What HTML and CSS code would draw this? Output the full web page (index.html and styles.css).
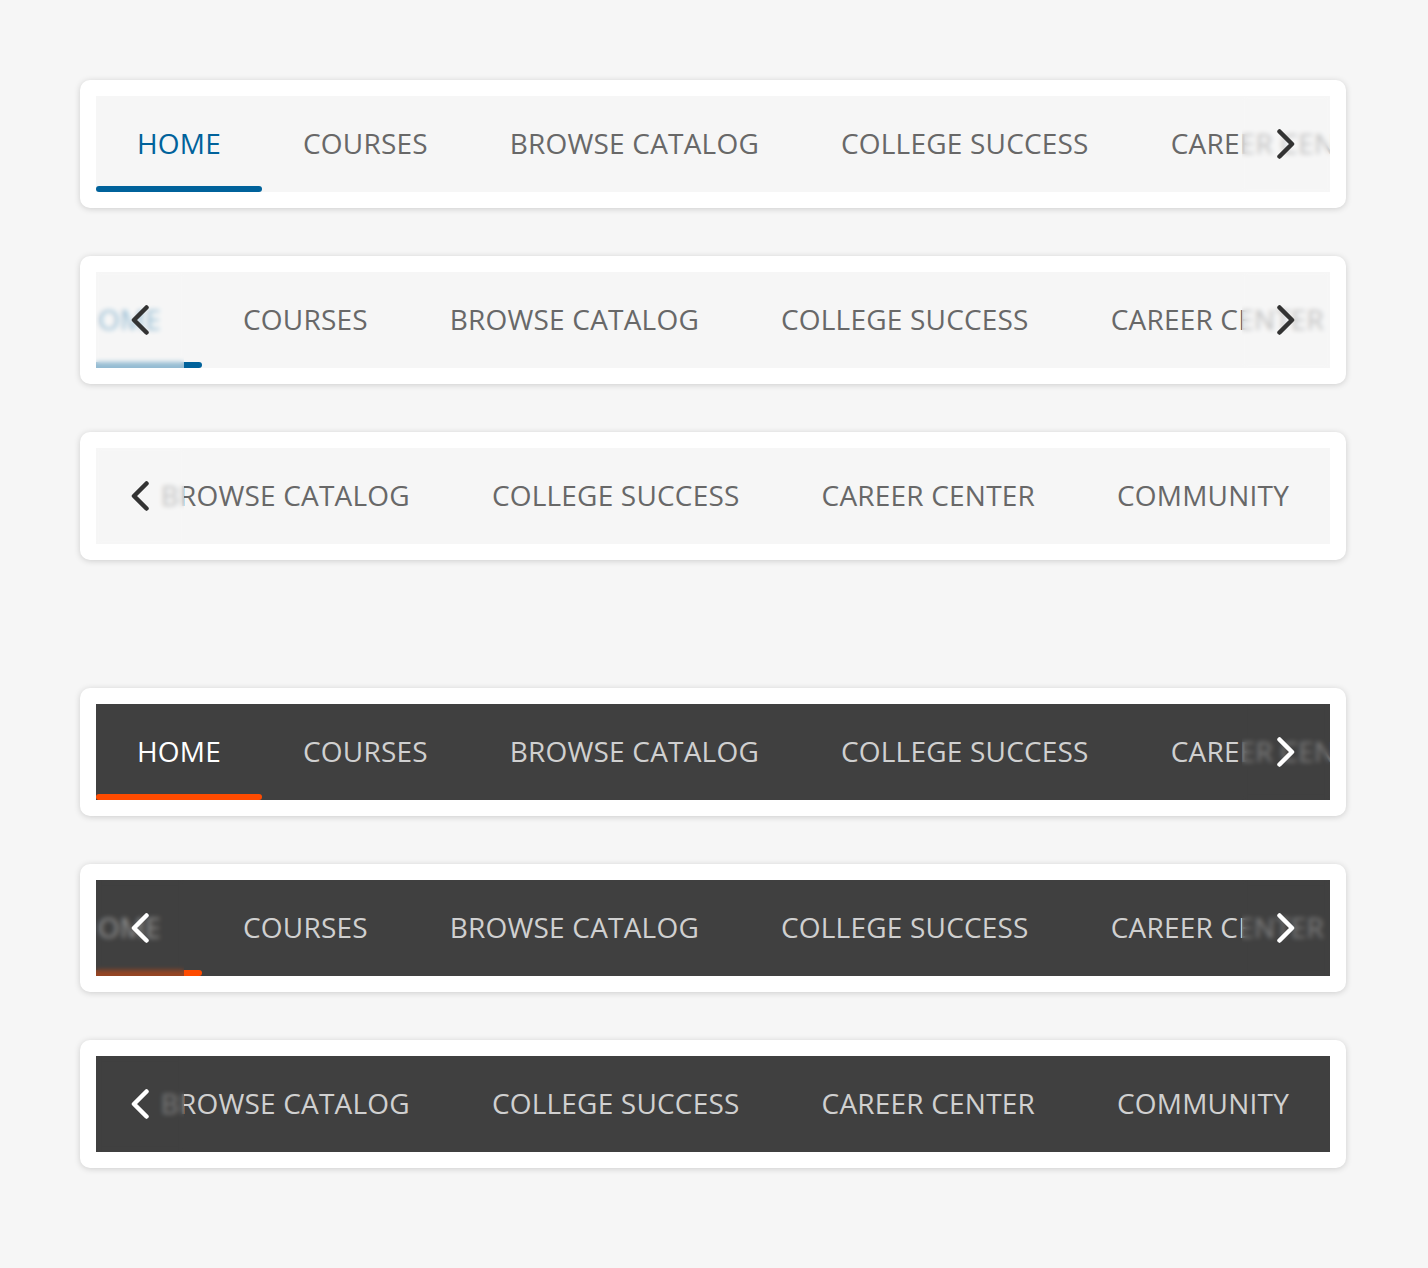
FILE: index.html
```html
<!DOCTYPE html>
<html lang="en">
<head>
<meta charset="utf-8">
<title>Tabs</title>
<link rel="stylesheet" href="styles.css">
</head>
<body>
<main class="page">
  <section class="group">
    <div class="card">
      <nav class="tabbar light">
        <ul class="tabs">
          <li class="tab active">Home</li>
          <li class="tab">Courses</li>
          <li class="tab">Browse Catalog</li>
          <li class="tab">College Success</li>
          <li class="tab">Career Center</li>
          <li class="tab">Community</li>
        </ul>
        <span class="fade fade-right"><svg class="chev" viewBox="0 0 18 30" width="18" height="30"><path d="M2.5 2.5 L15 15 L2.5 27.5"/></svg></span>
      </nav>
    </div>
    <div class="card">
      <nav class="tabbar light">
        <ul class="tabs scroll-mid">
          <li class="tab active">Home</li>
          <li class="tab">Courses</li>
          <li class="tab">Browse Catalog</li>
          <li class="tab">College Success</li>
          <li class="tab">Career Center</li>
          <li class="tab">Community</li>
        </ul>
        <span class="fade fade-left"><svg class="chev" viewBox="0 0 18 30" width="18" height="30"><path d="M15.5 2.5 L3 15 L15.5 27.5"/></svg></span>
        <span class="fade fade-right"><svg class="chev" viewBox="0 0 18 30" width="18" height="30"><path d="M2.5 2.5 L15 15 L2.5 27.5"/></svg></span>
      </nav>
    </div>
    <div class="card">
      <nav class="tabbar light at-end">
        <ul class="tabs">
          <li class="tab active">Home</li>
          <li class="tab">Courses</li>
          <li class="tab">Browse Catalog</li>
          <li class="tab">College Success</li>
          <li class="tab">Career Center</li>
          <li class="tab">Community</li>
        </ul>
        <span class="fade fade-left"><svg class="chev" viewBox="0 0 18 30" width="18" height="30"><path d="M15.5 2.5 L3 15 L15.5 27.5"/></svg></span>
      </nav>
    </div>
  </section>

  <section class="group">
    <div class="card">
      <nav class="tabbar dark">
        <ul class="tabs">
          <li class="tab active">Home</li>
          <li class="tab">Courses</li>
          <li class="tab">Browse Catalog</li>
          <li class="tab">College Success</li>
          <li class="tab">Career Center</li>
          <li class="tab">Community</li>
        </ul>
        <span class="fade fade-right"><svg class="chev" viewBox="0 0 18 30" width="18" height="30"><path d="M2.5 2.5 L15 15 L2.5 27.5"/></svg></span>
      </nav>
    </div>
    <div class="card">
      <nav class="tabbar dark">
        <ul class="tabs scroll-mid">
          <li class="tab active">Home</li>
          <li class="tab">Courses</li>
          <li class="tab">Browse Catalog</li>
          <li class="tab">College Success</li>
          <li class="tab">Career Center</li>
          <li class="tab">Community</li>
        </ul>
        <span class="fade fade-left"><svg class="chev" viewBox="0 0 18 30" width="18" height="30"><path d="M15.5 2.5 L3 15 L15.5 27.5"/></svg></span>
        <span class="fade fade-right"><svg class="chev" viewBox="0 0 18 30" width="18" height="30"><path d="M2.5 2.5 L15 15 L2.5 27.5"/></svg></span>
      </nav>
    </div>
    <div class="card">
      <nav class="tabbar dark at-end">
        <ul class="tabs">
          <li class="tab active">Home</li>
          <li class="tab">Courses</li>
          <li class="tab">Browse Catalog</li>
          <li class="tab">College Success</li>
          <li class="tab">Career Center</li>
          <li class="tab">Community</li>
        </ul>
        <span class="fade fade-left"><svg class="chev" viewBox="0 0 18 30" width="18" height="30"><path d="M15.5 2.5 L3 15 L15.5 27.5"/></svg></span>
      </nav>
    </div>
  </section>
</main>
</body>
</html>
```

FILE: styles.css
```css
* { box-sizing: border-box; }

html, body {
  margin: 0;
  padding: 0;
  background: #f6f6f6;
}

body {
  font-family: "Open Sans", "Liberation Sans", sans-serif;
}

.page {
  padding: 80px 82px 80px 80px;
  display: flex;
  flex-direction: column;
  gap: 128px;
}

.group {
  display: flex;
  flex-direction: column;
  gap: 48px;
}

.card {
  background: #ffffff;
  border-radius: 10px;
  padding: 16px;
  box-shadow: 0 1px 6px rgba(0, 0, 0, 0.17);
}

.tabbar {
  position: relative;
  height: 96px;
  overflow: hidden;
  display: flex;
  justify-content: flex-start;
}

.tabbar.at-end { justify-content: flex-end; }

.tabbar.light { background: #f6f6f6; }
.tabbar.dark { background: #404040; }

.tabs {
  list-style: none;
  margin: 0;
  padding: 0;
  display: flex;
  flex: none;
  height: 100%;
  white-space: nowrap;
}

.tabs.scroll-mid { transform: translateX(-60px); }

.tab {
  position: relative;
  flex: none;
  display: flex;
  align-items: center;
  padding: 0 41px 2px;
  font-size: 28px;
  font-weight: 400;
  letter-spacing: 0.2px;
  text-transform: uppercase;
  line-height: 1;
}

.light .tab { color: #686868; }
.dark .tab { color: #d0d0d0; }

.light .tab.active { color: #00629b; }
.dark .tab.active { color: #ffffff; }

.tab.active::after {
  content: "";
  position: absolute;
  left: 0;
  right: 0;
  bottom: 0;
  height: 6px;
  border-radius: 3px;
}

.light .tab.active::after { background: #00629b; }
.dark .tab.active::after { background: #ff4b00; }

.fade {
  position: absolute;
  top: 0;
  bottom: 0;
  width: 88px;
  display: flex;
  align-items: center;
  justify-content: center;
  backdrop-filter: blur(2.5px);
  -webkit-backdrop-filter: blur(2.5px);
}

.fade-left { left: 0; }
.fade-right { right: 0; }

.light .fade { background: rgba(246, 246, 246, 0.6); }
.dark .fade { background: rgba(64, 64, 64, 0.55); }

.chev {
  display: block;
  fill: none;
  stroke-width: 4.5;
  stroke-linecap: round;
  stroke-linejoin: round;
}

.light .chev { stroke: #333333; }
.dark .chev { stroke: #ffffff; }
```
